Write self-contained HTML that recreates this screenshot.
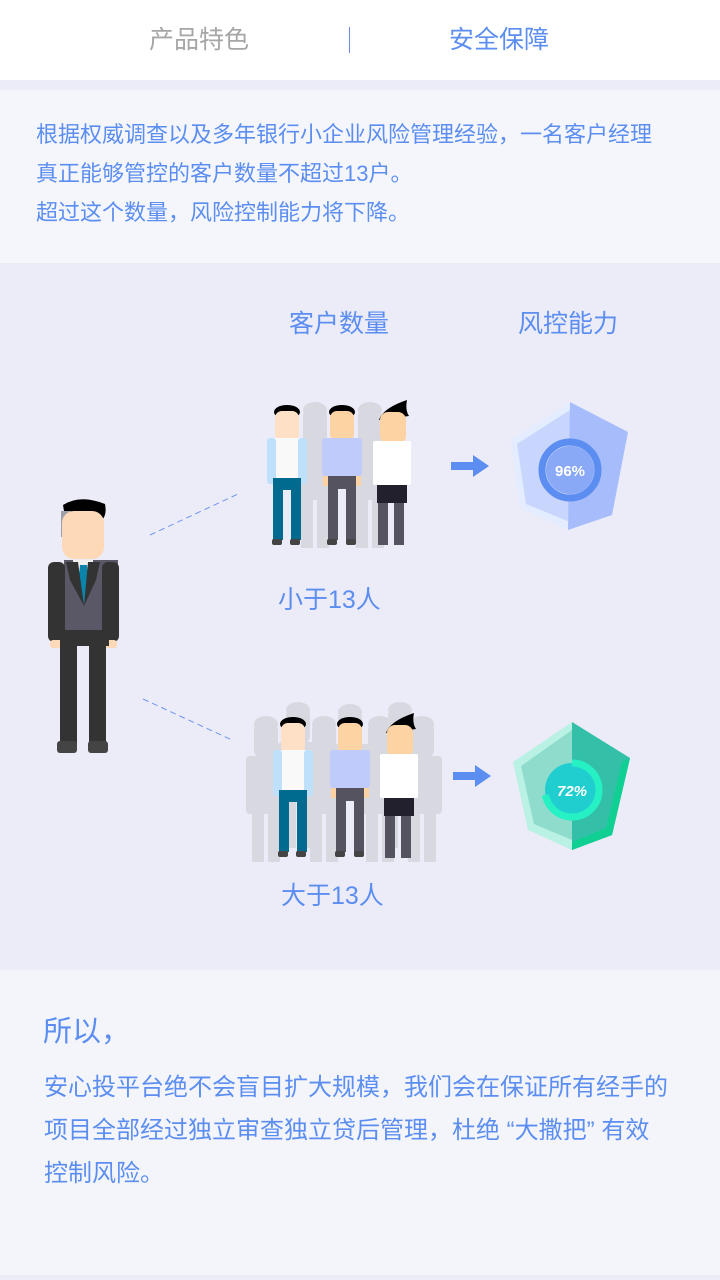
<!DOCTYPE html>
<html><head><meta charset="utf-8"><style>
*{margin:0;padding:0;box-sizing:border-box}
body{width:720px;height:1280px;position:relative;background:#ecebf8;font-family:"Liberation Sans","Noto Sans CJK SC",sans-serif;overflow:hidden}
.hdr{position:absolute;left:0;top:0;width:720px;height:80px;background:#fff}
.tab{position:absolute;top:22px;font-size:25px;line-height:36px}
.sep{position:absolute;left:349px;top:27px;width:1px;height:26px;background:#6d8ee8}
.intro{position:absolute;left:0;top:90px;width:720px;height:173px;background:#f5f6fb;color:#5b8ef0;font-size:22px;line-height:39px;padding:25px 0 0 36px;white-space:nowrap}
.lbl{position:absolute;color:#5b8ef0;font-size:25px}
.bot{position:absolute;left:0;top:970px;width:720px;height:305px;background:#f4f5fb;color:#5b8ef0}
</style></head><body>
<div class="hdr">
<div class="tab" style="left:149px;color:#a6a6a6">产品特色</div>
<div class="sep"></div>
<div class="tab" style="left:449px;color:#5b8ef0">安全保障</div>
</div>
<div class="intro">根据权威调查以及多年银行小企业风险管理经验，一名客户经理<br>真正能够管控的客户数量不超过13户。<br>超过这个数量，风险控制能力将下降。</div>

<div class="lbl" style="left:289px;top:304px">客户数量</div>
<div class="lbl" style="left:518px;top:304px">风控能力</div>
<div class="lbl" style="left:278px;top:580px">小于13人</div>
<div class="lbl" style="left:281px;top:876px">大于13人</div>

<svg style="position:absolute;left:0;top:0" width="720" height="1280">
<defs>
<g id="gray">
<ellipse cx="20" cy="8" rx="12" ry="8" fill="#d8d8e0"/>
<rect x="8" y="6" width="24" height="36" rx="8" fill="#d8d8e0"/>
<rect x="0" y="40" width="40" height="58" rx="4" fill="#d8d8e0"/>
<rect x="6" y="96" width="12" height="50" fill="#d8d8e0"/>
<rect x="22" y="96" width="12" height="50" fill="#d8d8e0"/>
</g>
<g id="p1">
<ellipse cx="20" cy="7" rx="13" ry="7" fill="#000"/>
<rect x="8" y="6" width="24" height="30" rx="7" fill="#fde0c6"/>
<rect x="0" y="33" width="40" height="40" rx="3" fill="#f9f9f9"/>
<rect x="0" y="33" width="9" height="46" rx="3" fill="#bfe0fb"/>
<rect x="31" y="33" width="9" height="46" rx="3" fill="#bfe0fb"/>
<rect x="6" y="73" width="28" height="12" fill="#006a8f"/>
<rect x="6" y="73" width="10" height="62" fill="#006a8f"/>
<rect x="24" y="73" width="10" height="62" fill="#006a8f"/>
<rect x="5" y="134" width="10" height="6" rx="2" fill="#444"/>
<rect x="23" y="134" width="10" height="6" rx="2" fill="#444"/>
</g>
<g id="p2">
<ellipse cx="20" cy="7" rx="13" ry="7" fill="#000"/>
<rect x="8" y="6" width="24" height="30" rx="7" fill="#fed3a3"/>
<rect x="0" y="33" width="40" height="38" rx="3" fill="#bfcbfb"/>
<rect x="1" y="71" width="5" height="10" fill="#fed3a3"/>
<rect x="34" y="71" width="5" height="10" fill="#fed3a3"/>
<rect x="6" y="71" width="28" height="64" fill="#55535f"/>
<rect x="16" y="84" width="8" height="51" fill="#ecebf8"/>
<rect x="5" y="134" width="10" height="6" rx="2" fill="#444"/>
<rect x="24" y="134" width="10" height="6" rx="2" fill="#444"/>
</g>
<g id="p3">
<path d="M6 14 Q10 2 34 -6 Q32 4 36 10 Z" fill="#000"/>
<rect x="7" y="6" width="26" height="32" rx="8" fill="#fed3a3"/>
<rect x="0" y="35" width="38" height="44" rx="2" fill="#fff"/>
<rect x="4" y="79" width="30" height="18" fill="#22202c"/>
<rect x="5" y="97" width="10" height="42" fill="#55535f"/>
<rect x="21" y="97" width="10" height="42" fill="#55535f"/>
</g>
</defs>
<use href="#gray" x="295" y="402"/>
<use href="#gray" x="350" y="402"/>
<use href="#p1" x="267" y="405"/>
<use href="#p2" x="322" y="405"/>
<use href="#p3" x="373" y="406"/>
<use href="#gray" x="246" y="716"/>
<use href="#gray" x="278" y="702"/>
<use href="#gray" x="304" y="716"/>
<use href="#gray" x="330" y="704"/>
<use href="#gray" x="360" y="716"/>
<use href="#gray" x="380" y="702"/>
<use href="#gray" x="402" y="716"/>
<use href="#p1" x="273" y="717"/>
<use href="#p2" x="330" y="717"/>
<use href="#p3" x="380" y="719"/>
<path d="M451 462h22v-7l16 11-16 11v-7h-22z" fill="#5b8ef0"/>
<path d="M453 772h22v-7l16 11-16 11v-7h-22z" fill="#5b8ef0"/>
<polygon points="570,402 628,432 612,515 568,530 520,508 511,440" fill="#e4ecff"/>
<polygon points="570,410 620,437 606,510 570,522 526,504 517,444" fill="#c8d6fd"/>
<polygon points="570,402 628,432 612,515 568,530" fill="#a7bdfb"/>
<circle cx="570" cy="470" r="28" fill="none" stroke="#5b8ef0" stroke-width="7"/>
<circle cx="570" cy="470" r="24" fill="#89a8f5"/>
<text x="570" y="476" text-anchor="middle" font-size="15" font-weight="bold" fill="#fff" font-family="Liberation Sans">96%</text>
<polygon points="572,722 630,758 612,835 572,850 528,830 513,762" fill="#b9f2e5"/>
<polygon points="572,730 622,762 606,828 572,840 534,824 521,766" fill="#8fdccd"/>
<polygon points="572,722 630,758 612,835 572,850" fill="#34c0a8"/>
<polygon points="630,758 612,835 572,850 572,842 606,828 622,762" fill="#0fcf93"/>
<circle cx="572" cy="790" r="27" fill="#20ced0"/>
<circle cx="572" cy="790" r="27" fill="none" stroke="#25f1c4" stroke-width="7" stroke-dasharray="122 170" transform="rotate(-90 572 790)"/>
<text x="572" y="796" text-anchor="middle" font-size="15" font-weight="bold" font-style="italic" fill="#fff" font-family="Liberation Sans">72%</text>
<line x1="150" y1="535" x2="238" y2="494" stroke="#6d96f0" stroke-width="1" stroke-dasharray="6 4"/>
<line x1="143" y1="699" x2="232" y2="740" stroke="#6d96f0" stroke-width="1" stroke-dasharray="6 4"/>
<g>
<path d="M63 505 Q80 494 105 504 Q108 520 96 523 L66 523 Z" fill="#000"/>
<rect x="61" y="511" width="10" height="26" fill="#a0a0a8"/>
<rect x="62" y="511" width="42" height="48" rx="12" fill="#fdd9b7"/>
<rect x="64" y="560" width="54" height="70" fill="#5a5866"/>
<rect x="73" y="560" width="20" height="12" fill="#f0f0f0"/>
<polygon points="80,565 87,565 89,590 83,604 78,590" fill="#0a84a8"/>
<path d="M66 562 L78 562 L84 606 L70 580 Z" fill="#333"/>
<path d="M100 562 L88 562 L84 606 L96 580 Z" fill="#333"/>
<rect x="48" y="562" width="17" height="80" rx="6" fill="#333"/>
<rect x="102" y="562" width="17" height="80" rx="6" fill="#333"/>
<rect x="50" y="640" width="14" height="8" rx="3" fill="#fdd9b7"/>
<rect x="103" y="640" width="14" height="8" rx="3" fill="#fdd9b7"/>
<rect x="60" y="630" width="49" height="16" fill="#333"/>
<rect x="60" y="640" width="17" height="104" fill="#333"/>
<rect x="89" y="640" width="17" height="104" fill="#333"/>
<rect x="57" y="741" width="20" height="12" rx="3" fill="#444"/>
<rect x="88" y="741" width="20" height="12" rx="3" fill="#444"/>
</g>
</svg>

<div class="bot">
<div style="position:absolute;left:43px;top:38px;font-size:29px">所以，</div>
<div style="position:absolute;left:44px;top:96px;font-size:24px;line-height:43px;white-space:nowrap">安心投平台绝不会盲目扩大规模，我们会在保证所有经手的<br>项目全部经过独立审查独立贷后管理，杜绝 “大撒把” 有效<br>控制风险。</div>
</div>
</body></html>
